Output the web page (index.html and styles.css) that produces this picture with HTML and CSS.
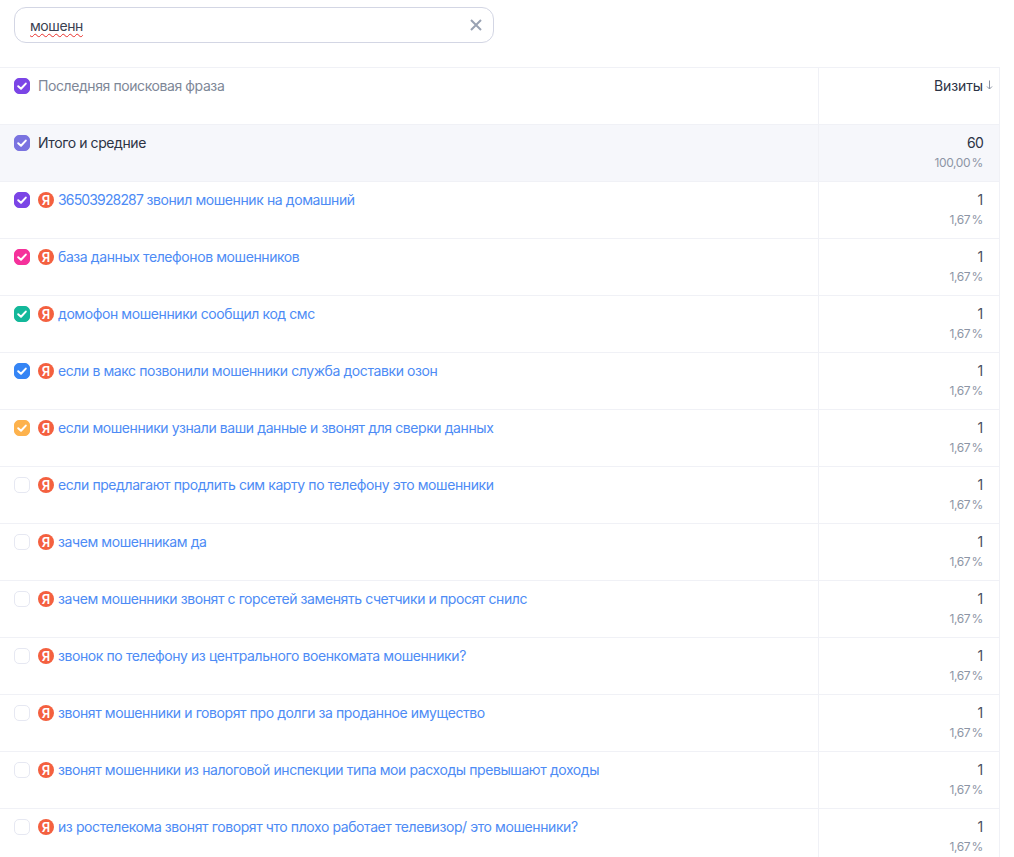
FILE: index.html
```html
<!DOCTYPE html>
<html lang="ru">
<head>
<meta charset="utf-8">
<title>Отчёт</title>
<link rel="stylesheet" href="styles.css">
</head>
<body>
<svg class="defs" width="0" height="0" aria-hidden="true">
  <symbol id="check" viewBox="0 0 16 16"><path d="M4.2 8.2 7 10.8 11.8 5.6" fill="none" stroke="#fff" stroke-width="2" stroke-linecap="round" stroke-linejoin="round"/></symbol>
</svg>
<div class="search-wrap">
  <div class="search">
    <span class="search-text">мошенн</span>
    <svg class="clear" viewBox="0 0 12 12"><path d="M1 1 11 11M11 1 1 11" stroke="#99a2b3" stroke-width="2" fill="none"/></svg>
  </div>
</div>
<div class="table">
  <div class="row head">
    <div class="cell-main"><span class="box purple"><svg><use href="#check"/></svg></span><span class="head-label">Последняя поисковая фраза</span></div>
    <div class="cell-num"><div class="num-title">Визиты<svg class="sort" viewBox="0 0 7 10"><path d="M3.5 0.5V9M1 6.5 3.5 9 6 6.5" fill="none" stroke="#8a93a3" stroke-width="1"/></svg></div></div>
  </div>
  <div class="row total">
    <div class="cell-main"><span class="box violet"><svg><use href="#check"/></svg></span><span class="total-label">Итого и средние</span></div>
    <div class="cell-num"><div class="val dark">60</div><div class="pct">100,00 %</div></div>
  </div>
  <div class="row">
    <div class="cell-main"><span class="box purple"><svg><use href="#check"/></svg></span><span class="ya">Я</span><a class="link"><span class="digits">36503928287</span> звонил мошенник на домашний</a></div>
    <div class="cell-num"><div class="val">1</div><div class="pct">1,67 %</div></div>
  </div>
  <div class="row">
    <div class="cell-main"><span class="box pink"><svg><use href="#check"/></svg></span><span class="ya">Я</span><a class="link">база данных телефонов мошенников</a></div>
    <div class="cell-num"><div class="val">1</div><div class="pct">1,67 %</div></div>
  </div>
  <div class="row">
    <div class="cell-main"><span class="box green"><svg><use href="#check"/></svg></span><span class="ya">Я</span><a class="link">домофон мошенники сообщил код смс</a></div>
    <div class="cell-num"><div class="val">1</div><div class="pct">1,67 %</div></div>
  </div>
  <div class="row">
    <div class="cell-main"><span class="box blue"><svg><use href="#check"/></svg></span><span class="ya">Я</span><a class="link">если в макс позвонили мошенники служба доставки озон</a></div>
    <div class="cell-num"><div class="val">1</div><div class="pct">1,67 %</div></div>
  </div>
  <div class="row">
    <div class="cell-main"><span class="box orange"><svg><use href="#check"/></svg></span><span class="ya">Я</span><a class="link">если мошенники узнали ваши данные и звонят для сверки данных</a></div>
    <div class="cell-num"><div class="val">1</div><div class="pct">1,67 %</div></div>
  </div>
  <div class="row">
    <div class="cell-main"><span class="box"></span><span class="ya">Я</span><a class="link">если предлагают продлить сим карту по телефону это мошенники</a></div>
    <div class="cell-num"><div class="val">1</div><div class="pct">1,67 %</div></div>
  </div>
  <div class="row">
    <div class="cell-main"><span class="box"></span><span class="ya">Я</span><a class="link">зачем мошенникам да</a></div>
    <div class="cell-num"><div class="val">1</div><div class="pct">1,67 %</div></div>
  </div>
  <div class="row">
    <div class="cell-main"><span class="box"></span><span class="ya">Я</span><a class="link">зачем мошенники звонят с горсетей заменять счетчики и просят снилс</a></div>
    <div class="cell-num"><div class="val">1</div><div class="pct">1,67 %</div></div>
  </div>
  <div class="row">
    <div class="cell-main"><span class="box"></span><span class="ya">Я</span><a class="link">звонок по телефону из центрального военкомата мошенники?</a></div>
    <div class="cell-num"><div class="val">1</div><div class="pct">1,67 %</div></div>
  </div>
  <div class="row">
    <div class="cell-main"><span class="box"></span><span class="ya">Я</span><a class="link">звонят мошенники и говорят про долги за проданное имущество</a></div>
    <div class="cell-num"><div class="val">1</div><div class="pct">1,67 %</div></div>
  </div>
  <div class="row">
    <div class="cell-main"><span class="box"></span><span class="ya">Я</span><a class="link">звонят мошенники из налоговой инспекции типа мои расходы превышают доходы</a></div>
    <div class="cell-num"><div class="val">1</div><div class="pct">1,67 %</div></div>
  </div>
  <div class="row">
    <div class="cell-main"><span class="box"></span><span class="ya">Я</span><a class="link">из ростелекома звонят говорят что плохо работает телевизор/ это мошенники?</a></div>
    <div class="cell-num"><div class="val">1</div><div class="pct">1,67 %</div></div>
  </div>
</div>
</body>
</html>
```
FILE: styles.css
```css
html, body {
  margin: 0;
  height: 857px;
  overflow: hidden;
  background: #fff;
  font-family: "Inter", "Noto Sans", sans-serif;
  font-size: 14px;
  letter-spacing: -0.41px;
  color: #2c3345;
}
.defs { display: block; height: 0; }
.search-wrap {
  height: 67px;
  padding: 7px 0 0 14px;
  box-sizing: border-box;
}
.search {
  width: 480px;
  height: 36px;
  box-sizing: border-box;
  border: 1px solid #d3d6e4;
  border-radius: 12px;
  display: flex;
  align-items: center;
  justify-content: space-between;
  padding: 0 11px 0 15px;
}
.search-text {
  color: #3a4151;
  text-decoration: underline wavy #e8302c 1.2px;
  text-underline-offset: 2px;
}
.clear { width: 12px; height: 12px; }
.table {
  width: 1000px;
  box-sizing: border-box;
  border-top: 1px solid #f0f1f6;
  border-right: 1px solid #f0f1f6;
}
.row {
  display: grid;
  grid-template-columns: 819px 1fr;
  height: 57px;
  box-sizing: border-box;
  border-bottom: 1px solid #f0f1f6;
}
.total { background: #f6f7fb; }
.cell-main {
  display: flex;
  align-items: flex-start;
  padding: 10px 0 0 14px;
  border-right: 1px solid #f0f1f6;
  line-height: 16px;
  min-width: 0;
}
.box {
  flex: none;
  width: 16px;
  height: 16px;
  box-sizing: border-box;
  border-radius: 5px;
  border: 1px solid #e6e8f2;
  margin-right: 8px;
  background: #fff;
}
.box svg { display: block; width: 16px; height: 16px; margin: -1px; }
.purple { background: #7b45e6; border-color: #7b45e6; }
.violet { background: #7a73e0; border-color: #7a73e0; }
.pink { background: #f5319b; border-color: #f5319b; }
.green { background: #13b89a; border-color: #13b89a; }
.blue { background: #3585f5; border-color: #3585f5; }
.orange { background: #fdb24d; border-color: #fdb24d; }
.ya {
  flex: none;
  width: 16px;
  height: 16px;
  border-radius: 50%;
  background: #f4603f;
  color: #fff;
  font: 600 13px/16px "Inter", sans-serif;
  letter-spacing: 0;
  text-align: center;
  margin-right: 4px;
}
.head-label { color: #7e8797; }
.total-label { color: #2c3345; }
.link { color: #4d8bf5; }
.digits { letter-spacing: -0.85px; }
.cell-num {
  padding: 10px 16px 0 0;
  text-align: right;
}
.num-title {
  position: relative;
  line-height: 16px;
  color: #2c3345;
  letter-spacing: -0.1px;
}
.sort {
  position: absolute;
  right: -10px;
  top: 2px;
  width: 7px;
  height: 10px;
}
.val {
  line-height: 16px;
  color: #4a5160;
  letter-spacing: -0.3px;
}
.val.dark { color: #2c3345; letter-spacing: -0.8px; }
.pct {
  margin-top: 5px;
  font-size: 12px;
  line-height: 14px;
  color: #8d95a5;
  letter-spacing: -0.4px;
  word-spacing: -1.5px;
}
```
